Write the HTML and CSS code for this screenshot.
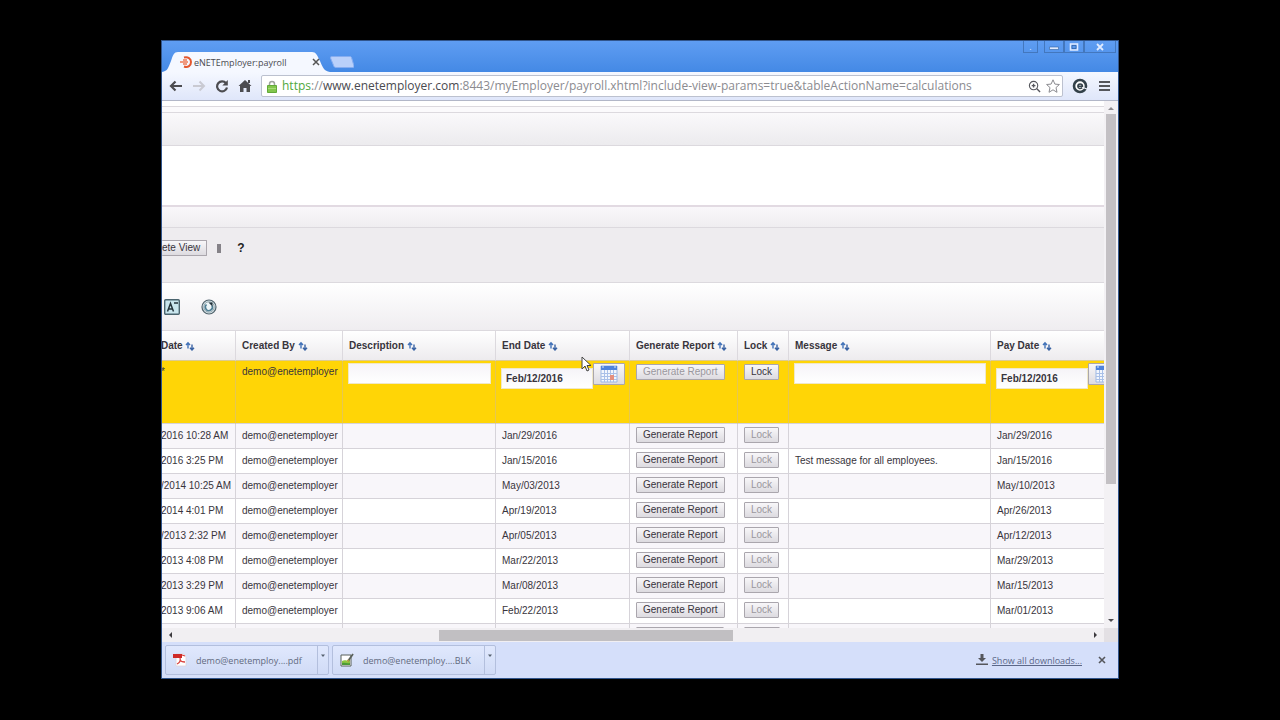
FILE: index.html
```
<!DOCTYPE html>
<html lang="en">
<head>
    <meta charset="UTF-8">
    <meta name="viewport" content="width=device-width, initial-scale=1.0">
    <title>eNETEmployer:payroll</title>
    <link rel="stylesheet" href="styles.css">
</head>
<body>
    <svg class="symbols" aria-hidden="true">
        <symbol id="sort" viewBox="0 0 10 10">
            <path d="M3 7.500V2M1 4l2-2.300L5 4" fill="none" stroke="#4272b8" stroke-width="1.400"/>
            <path d="M7 3.500V9M5 6.700L7 9l2-2.300" fill="none" stroke="#3a63a4" stroke-width="1.400"/>
        </symbol>
        <symbol id="calendar" viewBox="0 0 18 18">
            <path d="M1 1h16v16H1z" fill="#f2f6fd" stroke="#9db8e4"/>
            <path d="M1 1h16v4H1z" fill="#4f83dc"/>
            <path d="M3 1v2M15 1v2" stroke="#dbe7fa"/>
            <path d="M1 8.500h16M1 11.500h16M1 14.500h16M4.500 5v12M7.500 5v12M10.500 5v12M13.500 5v12" stroke="#a9c0e8" fill="none"/>
            <path d="M10 10h4v5h-4z" fill="#e5907f"/>
        </symbol>
    </svg>

    <div class="window">
        <header class="titlebar">
            <div class="tab">
                <svg class="tab-shape" viewBox="0 0 168 20" preserveAspectRatio="none"><path d="M0 20C6 19 6 16 9 9C11 3 12 0 16 0H150C154 0 155 3 158 9C161 16 162 19 168 20Z" fill="#f5f8ff"/></svg>
                <svg class="favicon" viewBox="0 0 12 12"><path d="M4 1.500c4-1 7 1 7 4.500s-3 6-7 4.500" fill="none" stroke="#e4572e" stroke-width="2"/><path d="M3 4h4M0 6h8M3 8h4" stroke="#ee7a55" stroke-width="1.300"/></svg>
                <span class="tab-title">eNETEmployer:payroll</span>
                <button class="tab-close" aria-label="Close tab"><svg viewBox="0 0 8 8"><path d="M1 1l6 6M7 1L1 7" stroke="#555" stroke-width="1.500"/></svg></button>
            </div>
            <button class="new-tab" aria-label="New tab"><svg viewBox="0 0 24 12"><path d="M2 .5h18q1 0 1.500 1L24 10q0 1.500-1 1.500H6q-1.500 0-2-1L.5 2Q0 .5 2 .5z" fill="#b9d0fa" stroke="#86adf0"/></svg></button>
            <div class="window-buttons">
                <button class="user" aria-label="User">.</button>
                <button class="minimize" aria-label="Minimize"><svg viewBox="0 0 10 8"><path d="M.5 4h9v2.500h-9z" fill="#dfeaff" stroke="#315f9e" stroke-width=".6"/></svg></button>
                <button class="maximize" aria-label="Maximize"><svg viewBox="0 0 10 8"><path d="M1.500 1h7v6h-7z" fill="none" stroke="#dfeaff" stroke-width="1.600"/><path d="M3 2.500h4v3H3z" fill="none" stroke="#315f9e" stroke-width=".7"/></svg></button>
                <button class="close" aria-label="Close"><svg viewBox="0 0 10 8"><path d="M2 1l6 6M8 1L2 7" stroke="#dfeaff" stroke-width="1.800"/></svg></button>
            </div>
        </header>

        <nav class="toolbar">
            <button aria-label="Back"><svg viewBox="0 0 14 14"><path d="M13 7H2M6.500 2.500L2 7l4.500 4.500" fill="none" stroke="#4c4c50" stroke-width="2.200"/></svg></button>
            <button aria-label="Forward"><svg viewBox="0 0 14 14"><path d="M1 7h11M7.500 2.500L12 7l-4.500 4.500" fill="none" stroke="#c9cad2" stroke-width="2"/></svg></button>
            <button aria-label="Reload"><svg viewBox="0 0 14 14"><path d="M11 4.200A5 5 0 1 0 12 8.500" fill="none" stroke="#4c4c50" stroke-width="2.200"/><path d="M12.800 1v5.500H7.300z" fill="#4c4c50"/></svg></button>
            <button aria-label="Home"><svg viewBox="0 0 14 14"><path d="M7 1l6.500 6H12v6H8.500V9h-3v4H2V7H.5zM10 1h2v3h-2z" fill="#4c4c50"/></svg></button>
            <div class="address">
                <svg class="lock-icon" viewBox="0 0 10 13"><path d="M2.500 6V4a2.500 2.500 0 0 1 5 0v2" fill="none" stroke="#a0a4a0" stroke-width="1.500"/><path d="M.5 5.500h9v7h-9z" fill="#83c64c" stroke="#62a939"/><path d="M1 8.500h8" stroke="#a6dc78"/></svg>
                <div class="url" role="textbox" aria-label="Address"><span class="scheme">https</span>://<span class="host">www.enetemployer.com</span>:8443/myEmployer/payroll.xhtml?include-view-params=true&amp;tableActionName=calculations</div>
                <svg class="address-icon" viewBox="0 0 14 14"><circle cx="6" cy="6" r="4.500" fill="none" stroke="#55565c" stroke-width="1.200"/><path d="M4 6h4M6 4v4M9.500 9.500L13 13" stroke="#55565c" stroke-width="1.500"/></svg>
                <svg class="address-icon star" viewBox="0 0 14 14"><path d="M7 .8l1.900 4.300 4.500.4L10 8.600l1 4.700-4-2.500-4 2.500 1-4.700L.6 5.500l4.500-.4z" fill="#fff" stroke="#8b8b90"/></svg>
            </div>
            <button class="extension" aria-label="Extension"><svg viewBox="0 0 16 16"><circle cx="8" cy="8" r="6" fill="#fff" stroke="#33414a" stroke-width="2.600"/><path d="M5.800 8.200h4.700c0-3-4.700-3-4.700 0s3 2.600 4.400 1.400" fill="none" stroke="#33414a" stroke-width="1.400"/><path d="M11 9.500l4 1.500" stroke="#f0f4ff" stroke-width="1.200"/></svg></button>
            <button aria-label="Menu"><svg viewBox="0 0 14 14"><path d="M2 3h11M2 7h11M2 11h11" stroke="#55565c" stroke-width="2"/></svg></button>
        </nav>

        <div class="page">
            <main class="view">
                <div class="band line-band"></div>
                <div class="band banner"></div>
                <div class="band blank"></div>
                <div class="band subheader"></div>
                <div class="band actions">
                    <button class="btn delete-view">ete View</button>
                    <span class="divider"></span>
                    <button class="help" aria-label="Help">?</button>
                </div>
                <div class="band tools">
                    <button aria-label="Decrease text size"><svg viewBox="0 0 16 16"><rect x=".7" y=".7" width="14.600" height="14.600" rx="1" fill="#c9e6ee" stroke="#4b646e" stroke-width="1.400"/><path d="M3.500 12.500L6.500 4.500l3 8M4.500 10h4M10 4h4" fill="none" stroke="#25353c" stroke-width="1.500"/></svg></button>
                    <button aria-label="Refresh"><svg viewBox="0 0 16 16"><circle cx="8" cy="8" r="7" fill="#d4e4e9" stroke="#51636c" stroke-width="1.200"/><circle cx="8" cy="8" r="5.200" fill="#eef6f8" stroke="#899aa1" stroke-width=".8"/><path d="M5.500 5.500A3.500 3.500 0 1 0 11 6.500" fill="none" stroke="#4f7f95" stroke-width="1.600"/><path d="M7.500 3.500h4v4z" fill="#22323a"/></svg></button>
                </div>

                <table class="payrolls">
                    <colgroup>
                        <col class="c-created"><col class="c-by"><col class="c-description"><col class="c-end"><col class="c-report"><col class="c-lock"><col class="c-message"><col class="c-pay">
                    </colgroup>
                    <thead>
                        <tr>
                            <th>Date <svg><use href="#sort"/></svg></th>
                            <th>Created By <svg><use href="#sort"/></svg></th>
                            <th>Description <svg><use href="#sort"/></svg></th>
                            <th>End Date <svg><use href="#sort"/></svg></th>
                            <th>Generate Report <svg><use href="#sort"/></svg></th>
                            <th>Lock <svg><use href="#sort"/></svg></th>
                            <th>Message <svg><use href="#sort"/></svg></th>
                            <th>Pay Date <svg><use href="#sort"/></svg></th>
                        </tr>
                    </thead>
                    <tbody>
                        <tr class="selected">
                            <td>*</td>
                            <td>demo@enetemployer</td>
                            <td class="field"><input type="text" aria-label="Description"></td>
                            <td class="field"><div class="date"><input type="text" value="Feb/12/2016" aria-label="End Date"><button class="btn" aria-label="Pick end date"><svg><use href="#calendar"/></svg></button></div></td>
                            <td><button class="btn" disabled>Generate Report</button></td>
                            <td><button class="btn">Lock</button></td>
                            <td class="field"><input type="text" aria-label="Message"></td>
                            <td class="field"><div class="date"><input type="text" value="Feb/12/2016" aria-label="Pay Date"><button class="btn" aria-label="Pick pay date"><svg><use href="#calendar"/></svg></button></div></td>
                        </tr>
                        <tr>
                            <td>2016 10:28 AM</td><td>demo@enetemployer</td><td></td><td>Jan/29/2016</td>
                            <td><button class="btn">Generate Report</button></td><td><button class="btn" disabled>Lock</button></td><td></td><td>Jan/29/2016</td>
                        </tr>
                        <tr>
                            <td>2016 3:25 PM</td><td>demo@enetemployer</td><td></td><td>Jan/15/2016</td>
                            <td><button class="btn">Generate Report</button></td><td><button class="btn" disabled>Lock</button></td><td>Test message for all employees.</td><td>Jan/15/2016</td>
                        </tr>
                        <tr>
                            <td>/2014 10:25 AM</td><td>demo@enetemployer</td><td></td><td>May/03/2013</td>
                            <td><button class="btn">Generate Report</button></td><td><button class="btn" disabled>Lock</button></td><td></td><td>May/10/2013</td>
                        </tr>
                        <tr>
                            <td>2014 4:01 PM</td><td>demo@enetemployer</td><td></td><td>Apr/19/2013</td>
                            <td><button class="btn">Generate Report</button></td><td><button class="btn" disabled>Lock</button></td><td></td><td>Apr/26/2013</td>
                        </tr>
                        <tr>
                            <td>/2013 2:32 PM</td><td>demo@enetemployer</td><td></td><td>Apr/05/2013</td>
                            <td><button class="btn">Generate Report</button></td><td><button class="btn" disabled>Lock</button></td><td></td><td>Apr/12/2013</td>
                        </tr>
                        <tr>
                            <td>2013 4:08 PM</td><td>demo@enetemployer</td><td></td><td>Mar/22/2013</td>
                            <td><button class="btn">Generate Report</button></td><td><button class="btn" disabled>Lock</button></td><td></td><td>Mar/29/2013</td>
                        </tr>
                        <tr>
                            <td>2013 3:29 PM</td><td>demo@enetemployer</td><td></td><td>Mar/08/2013</td>
                            <td><button class="btn">Generate Report</button></td><td><button class="btn" disabled>Lock</button></td><td></td><td>Mar/15/2013</td>
                        </tr>
                        <tr>
                            <td>2013 9:06 AM</td><td>demo@enetemployer</td><td></td><td>Feb/22/2013</td>
                            <td><button class="btn">Generate Report</button></td><td><button class="btn" disabled>Lock</button></td><td></td><td>Mar/01/2013</td>
                        </tr>
                        <tr class="next">
                            <td></td><td></td><td></td><td></td>
                            <td><button class="btn" aria-label="Generate Report"></button></td><td><button class="btn" aria-label="Lock" disabled></button></td><td></td><td></td>
                        </tr>
                    </tbody>
                </table>
            </main>
            <div class="scroll-y">
                <svg viewBox="0 0 8 8"><path d="M1 6l3-3 3 3z" fill="#8c8a8e"/></svg>
                <div class="thumb"></div>
                <svg viewBox="0 0 8 8"><path d="M1 2l3 3 3-3z" fill="#4c4a4e"/></svg>
            </div>
            <div class="scroll-x">
                <svg viewBox="0 0 8 8"><path d="M6 1L3 4l3 3z" fill="#3c3a3e"/></svg>
                <div class="track"><div class="thumb"></div></div>
                <svg viewBox="0 0 8 8"><path d="M2 1l3 3-3 3z" fill="#3c3a3e"/></svg>
            </div>
            <div class="corner"></div>
            <svg class="cursor" viewBox="0 0 10 16"><path d="M1 1v12l3-3 2 5 2-1-2-4.500h4z" fill="#fff" stroke="#444"/></svg>
        </div>

        <footer class="downloads">
            <div class="download">
                <button class="file"><svg viewBox="0 0 14 14"><path d="M3 1h8l2 3v9H3z" fill="#fff" stroke="#dad3dc" stroke-width=".8"/><path d="M0 1h9v4H0z" fill="#cf2a27"/><path d="M7 5c1 3-1 5-3 6M7 7c1 2 3 2 5 2M9 2l3 1" fill="none" stroke="#d9423d" stroke-width="1.300"/></svg>demo@enetemploy....pdf</button>
                <button class="more" aria-label="More options"><svg viewBox="0 0 6 4"><path d="M1 .5h4L3 3z" fill="#55606e"/></svg></button>
            </div>
            <div class="download">
                <button class="file"><svg viewBox="0 0 14 14"><path d="M1 2h10v11H1z" fill="#fff" stroke="#59605a"/><path d="M2 8c3-2 5 1 8-2v6H2z" fill="#8cc63f"/><path d="M2 10c3-1 5 1 8 0v2H2z" fill="#4d9b36"/><path d="M13 1L8 8" stroke="#59605a" stroke-width="1.800"/><path d="M8 6L7 9l2-1z" fill="#d9a441"/></svg>demo@enetemploy....BLK</button>
                <button class="more" aria-label="More options"><svg viewBox="0 0 6 4"><path d="M1 .5h4L3 3z" fill="#55606e"/></svg></button>
            </div>
            <a class="show-all" href="#"><svg viewBox="0 0 12 12"><path d="M4.500 0h3v4H10L6 8 2 4h2.500zM0 9.500h12V11H0z" fill="#55565c"/></svg><span>Show all downloads...</span></a>
            <button class="bar-close" aria-label="Close downloads bar"><svg viewBox="0 0 8 8"><path d="M1 1l6 6M7 1L1 7" stroke="#55565c" stroke-width="1.600"/></svg></button>
        </footer>
    </div>
</body>
</html>
```
FILE: styles.css
```
* {
    box-sizing: border-box;
}
body {
    margin: 0;
    height: 100vh;
    padding: 40px 161px 41px;
    background: #000;
    display: flex;
    font-family: "Liberation Sans", Arial, sans-serif;
    font-size: 10px;
    color: #38343c;
}
button {
    margin: 0;
    padding: 0;
    border: none;
    background: none;
    font: inherit;
    color: inherit;
}
svg {
    display: block;
    flex: none;
}
.symbols {
    display: none;
}
.window {
    flex: 1;
    min-width: 0;
    display: flex;
    flex-direction: column;
    border: 1px solid #31558c;
    background: #fff;
}

/* Title bar */
.titlebar {
    height: 31px;
    flex: none;
    display: flex;
    align-items: flex-end;
    background: linear-gradient(#5f9df2, #4489e5);
    font-family: "Open Sans", sans-serif;
    font-size: 9px;
}
.tab {
    position: relative;
    width: 168px;
    height: 20px;
    padding: 0 10px 0 18px;
    display: flex;
    align-items: center;
    gap: 2px;
}
.tab-shape {
    position: absolute;
    left: 0;
    top: 0;
    width: 100%;
    height: 100%;
}
.favicon {
    position: relative;
    width: 12px;
    height: 12px;
}
.tab-title {
    position: relative;
    flex: 1;
    color: #4a4a50;
}
.tab-close {
    position: relative;
    width: 8px;
}
.new-tab {
    width: 24px;
    height: 12px;
    margin-bottom: 4px;
}
.window-buttons {
    display: flex;
    align-self: flex-start;
    margin-left: auto;
    margin-right: 2px;
}
.window-buttons button {
    width: 20px;
    height: 12px;
    border: 1px solid #4377bd;
    border-top: none;
    display: flex;
    align-items: center;
    justify-content: center;
    color: #dfeaff;
}
.window-buttons svg {
    width: 10px;
    height: 8px;
}
.window-buttons .user {
    width: 15px;
    margin-right: 6px;
}
.window-buttons .close {
    width: 32px;
}

/* Toolbar */
.toolbar {
    height: 29px;
    flex: none;
    display: flex;
    align-items: center;
    gap: 9px;
    padding: 0 7px;
    background: linear-gradient(#f5f8ff, #dfe6fa);
    border-bottom: 1px solid #b2b7c8;
}
.toolbar button {
    width: 14px;
    height: 14px;
}
.toolbar .extension {
    width: 16px;
    height: 16px;
}
.address {
    flex: 1;
    min-width: 0;
    height: 22px;
    display: flex;
    align-items: center;
    gap: 5px;
    padding: 0 2px 0 5px;
    border: 1px solid #bcc1cf;
    border-radius: 2px;
    background: #fff;
}
.lock-icon {
    width: 10px;
    height: 13px;
}
.url {
    flex: 1;
    overflow: hidden;
    white-space: nowrap;
    font-family: "Open Sans", sans-serif;
    font-size: 12px;
    line-height: 18px;
    color: #8b8b90;
}
.scheme {
    color: #50a83c;
}
.host {
    color: #4a4a50;
}
.address-icon {
    width: 13px;
    height: 13px;
}
.star {
    width: 14px;
    height: 14px;
}

/* Page */
.page {
    position: relative;
    flex: 1;
    min-height: 0;
    display: grid;
    grid-template-columns: minmax(0, 1fr) 14px;
    grid-template-rows: minmax(0, 1fr) 14px;
}
.view {
    overflow: hidden;
}
.band {
    border-bottom: 1px solid #dcd9de;
}
.line-band {
    height: 12px;
    background: linear-gradient(#fff 5px, #dcd9de 5px, #dcd9de 6px, #fbfafc 6px);
}
.banner {
    height: 33px;
    background: linear-gradient(#faf9fb, #ecebee);
}
.blank {
    height: 61px;
    border-bottom: 2px solid #e2dae2;
}
.subheader {
    height: 21px;
    background: linear-gradient(#f9f7fa, #efedf0);
}
.actions {
    height: 55px;
    display: flex;
    align-items: flex-start;
    padding-top: 12px;
    background: #eeecef;
}
.tools {
    height: 48px;
    display: flex;
    align-items: center;
    gap: 21px;
    padding-left: 2px;
    background: linear-gradient(#fff, #efedf0);
}
.tools button {
    width: 16px;
    height: 16px;
}
.btn {
    height: 16px;
    padding: 0 6px;
    border: 1px solid #aaa6ad;
    border-radius: 1px;
    background: linear-gradient(#f8f7f9, #dddbe0);
    line-height: 14px;
    white-space: nowrap;
}
.btn:disabled {
    color: #9a979d;
}
.delete-view {
    padding-left: 0;
    border-left: none;
}
.divider {
    width: 4px;
    height: 9px;
    margin: 4px 16px 0 10px;
    background: #858288;
}
.help {
    font-size: 12px;
    font-weight: bold;
    line-height: 17px;
    color: #222;
}

/* Payroll table */
.payrolls {
    table-layout: fixed;
    width: 1012px;
    margin-left: -1px;
    border-collapse: separate;
    border-spacing: 0;
}
.c-created { width: 75px; }
.c-by { width: 107px; }
.c-description { width: 153px; }
.c-end { width: 134px; }
.c-report { width: 108px; }
.c-lock { width: 51px; }
.c-message { width: 202px; }
.c-pay { width: 182px; }
.payrolls th {
    height: 30px;
    padding: 0 0 0 6px;
    border-right: 1px solid #dcd9de;
    border-bottom: 1px solid #dccb90;
    background: linear-gradient(#fff, #edebee);
    text-align: left;
    white-space: nowrap;
}
.payrolls th svg {
    display: inline-block;
    width: 10px;
    height: 10px;
    vertical-align: -2px;
}
.payrolls td {
    height: 25px;
    padding: 0 0 2px 6px;
    border-right: 1px solid #d6d3d9;
    border-bottom: 1px solid #d6d3d9;
    white-space: nowrap;
}
.payrolls th:first-child,
.payrolls td:first-child {
    padding-left: 0;
}
.payrolls td .btn {
    display: block;
}
.payrolls tr:nth-child(even) td {
    background: #f8f6fa;
}
.payrolls .selected td {
    height: 63px;
    padding-top: 3px;
    border-right-color: #e6c750;
    background: #ffd506;
    vertical-align: top;
    line-height: 16px;
}
.payrolls .selected .field {
    padding: 2px 4px 0 5px;
}
.payrolls .next .btn {
    width: 88px;
}
.payrolls .next .btn:disabled {
    width: 36px;
}
.field input {
    display: block;
    width: 100%;
    height: 21px;
    padding: 0 4px;
    border: 1px solid #f0e8c8;
    background: linear-gradient(#f6f4f8, #fff);
    font: bold 10px "Liberation Sans", Arial, sans-serif;
    color: #38343c;
}
.date {
    display: flex;
}
.date input {
    width: 92px;
    margin-top: 5px;
}
.payrolls .date .btn {
    width: 32px;
    height: 22px;
    padding: 0 6px;
}
.date svg {
    width: 18px;
    height: 18px;
}

/* Scroll bars */
.scroll-y {
    display: flex;
    flex-direction: column;
    align-items: center;
    padding: 3px 0;
    background: #f3f1f4;
}
.scroll-y svg,
.scroll-x svg {
    width: 8px;
    height: 8px;
}
.scroll-y .thumb {
    width: 10px;
    height: 71%;
    margin: 2px 0 auto;
    background: #c3c0c4;
}
.scroll-x {
    display: flex;
    align-items: center;
    padding: 0 4px;
    background: #f1eff2;
}
.scroll-x .track {
    flex: 1;
    padding-left: 265px;
}
.scroll-x .thumb {
    width: 45%;
    height: 11px;
    background: #c1bfc2;
}
.corner {
    background: #e3e0e4;
}
.cursor {
    position: absolute;
    left: 419px;
    top: 255px;
    width: 10px;
    height: 16px;
}

/* Downloads bar */
.downloads {
    height: 36px;
    flex: none;
    display: flex;
    align-items: center;
    gap: 3px;
    padding: 0 12px 0 3px;
    background: #d5dffa;
    font-family: "Open Sans", sans-serif;
    font-size: 9px;
    color: #626a80;
}
.download {
    display: flex;
    width: 164px;
    height: 30px;
    border: 1px solid #b3bfdd;
    border-radius: 2px;
    background: linear-gradient(#e0e8fd, #d0dbf6);
}
.file {
    flex: 1;
    display: flex;
    align-items: center;
    gap: 9px;
    padding-left: 7px;
    white-space: nowrap;
}
.file svg {
    width: 14px;
    height: 14px;
}
.more {
    width: 11px;
    padding: 0 2px 8px;
    border-left: 1px solid #b3bfdd;
}
.show-all {
    display: flex;
    align-items: center;
    gap: 4px;
    margin-left: auto;
    margin-right: 13px;
    color: #5b6788;
}
.show-all svg {
    width: 12px;
    height: 12px;
}
.bar-close {
    width: 8px;
}
```
